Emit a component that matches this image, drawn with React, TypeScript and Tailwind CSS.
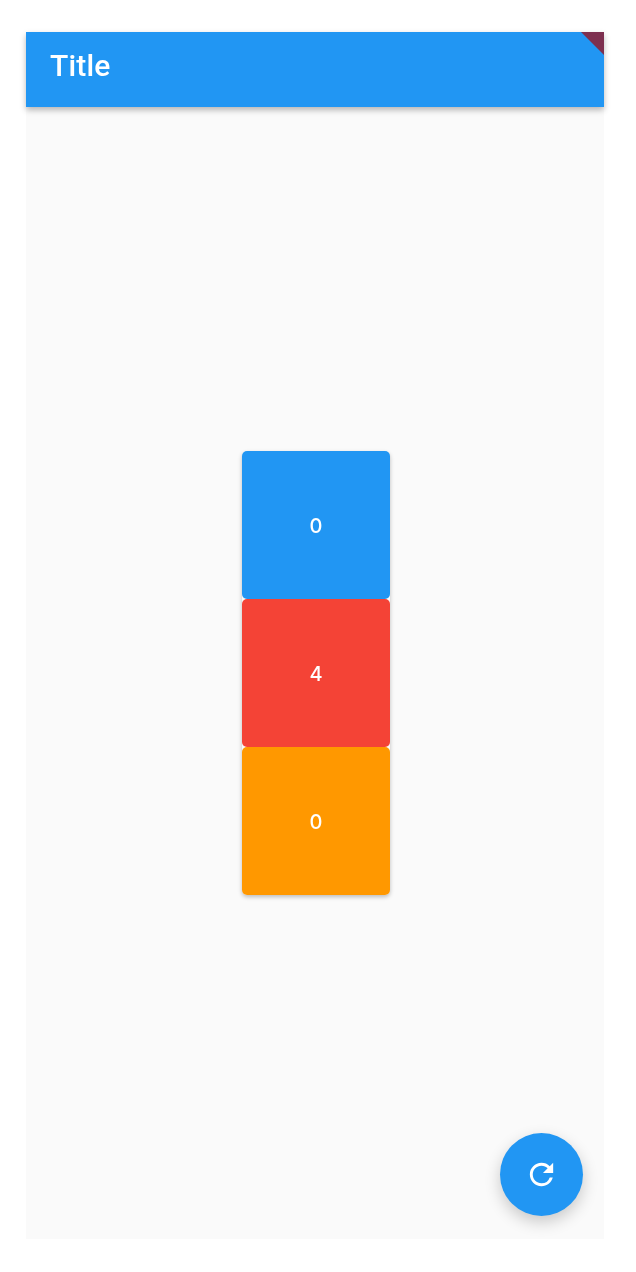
import { MdRefresh } from "react-icons/md";

const boxes = [
  { value: 0, color: "bg-[#2196f3]" },
  { value: 4, color: "bg-[#f44336]" },
  { value: 0, color: "bg-[#ff9800]" },
];

export default function App() {
  return (
    <div className="min-h-[1272px] bg-white pt-8 pl-[26px] font-['Roboto',sans-serif]">
      <div className="relative flex h-[1207px] w-[578px] flex-col bg-[#fafafa]">
        <header className="relative flex h-[75px] items-center overflow-hidden bg-[#2196f3] pb-2 pl-6 shadow-[0_3px_6px_rgba(0,0,0,0.28)]">
          <h1 className="text-[30px] font-medium tracking-[0.2px] text-white blur-[0.5px]">Title</h1>
          {/* debug banner corner */}
          <div className="absolute top-0 right-0 h-[23px] w-[23px] bg-[#7d2f4f] [clip-path:polygon(0_0,100%_0,100%_100%)] blur-[0.5px]" />
        </header>

        <main className="flex flex-1 flex-col items-center justify-center pl-0.5">
          <div className="rounded-[5px] shadow-[0_2px_4px_rgba(0,0,0,0.25)]">
            {boxes.map((box, i) => (
              <div
                key={i}
                className={`flex h-[148px] w-[148px] items-center justify-center rounded-[5px] pt-0.5 font-['Inter',sans-serif] text-[20px] font-medium text-white ${box.color}`}
              >
                <span className="blur-[0.5px]">{box.value}</span>
              </div>
            ))}
          </div>
        </main>

        <button className="absolute right-[21px] bottom-[23px] flex h-[83px] w-[83px] items-center justify-center rounded-full bg-[#2196f3] text-white shadow-[0_6px_16px_rgba(0,0,0,0.2)]">
          <MdRefresh size={35} className="blur-[0.4px]" />
        </button>
      </div>
    </div>
  );
}
